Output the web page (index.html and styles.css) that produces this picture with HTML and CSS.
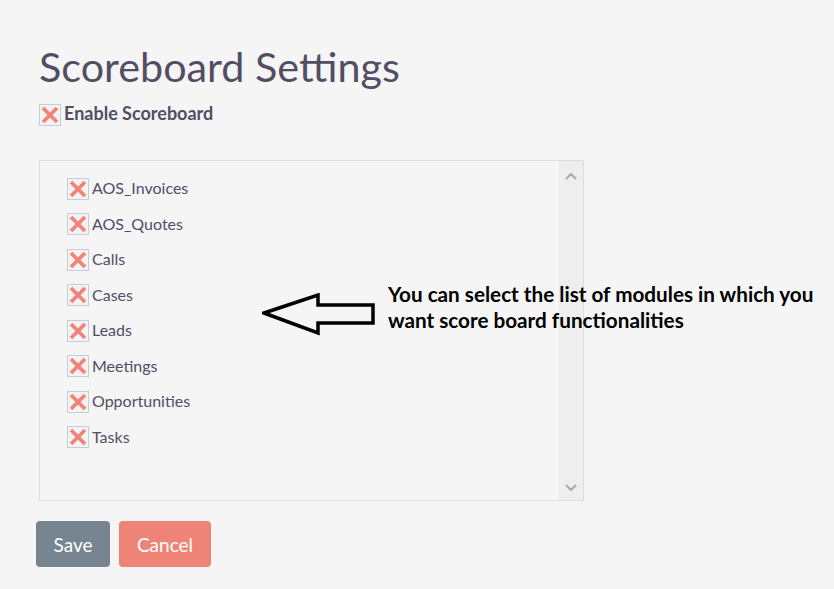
FILE: index.html
```html
<!DOCTYPE html>
<html>
<head>
<meta charset="utf-8">
<link rel="stylesheet" href="styles.css">
</head>
<body>
<div class="page">
  <h1 class="title">Scoreboard Settings</h1>
  <label class="enable">
    <span class="cb"><svg viewBox="0 0 20 20"><path d="M3 3L17 17M17 3L3 17"/></svg></span>
    <span>Enable Scoreboard</span>
  </label>
  <div class="listbox">
    <ul class="items">
      <li><span class="cb"><svg viewBox="0 0 20 20"><path d="M3 3L17 17M17 3L3 17"/></svg></span>AOS_Invoices</li>
      <li><span class="cb"><svg viewBox="0 0 20 20"><path d="M3 3L17 17M17 3L3 17"/></svg></span>AOS_Quotes</li>
      <li><span class="cb"><svg viewBox="0 0 20 20"><path d="M3 3L17 17M17 3L3 17"/></svg></span>Calls</li>
      <li><span class="cb"><svg viewBox="0 0 20 20"><path d="M3 3L17 17M17 3L3 17"/></svg></span>Cases</li>
      <li><span class="cb"><svg viewBox="0 0 20 20"><path d="M3 3L17 17M17 3L3 17"/></svg></span>Leads</li>
      <li><span class="cb"><svg viewBox="0 0 20 20"><path d="M3 3L17 17M17 3L3 17"/></svg></span>Meetings</li>
      <li><span class="cb"><svg viewBox="0 0 20 20"><path d="M3 3L17 17M17 3L3 17"/></svg></span>Opportunities</li>
      <li><span class="cb"><svg viewBox="0 0 20 20"><path d="M3 3L17 17M17 3L3 17"/></svg></span>Tasks</li>
    </ul>
    <div class="scrollbar">
      <svg class="sarrow" viewBox="0 0 12 8"><path d="M1 7L6 2L11 7"/></svg>
      <svg class="sarrow" viewBox="0 0 12 8"><path d="M1 1L6 6L11 1"/></svg>
    </div>
  </div>
  <div class="actions">
    <button class="btn save">Save</button>
    <button class="btn cancel">Cancel</button>
  </div>
  <svg class="callout-arrow" viewBox="0 0 114 44"><path d="M2 20L56 2L56 12L111 12L111 30L56 30L56 40Z"/></svg>
  <p class="note">You can select the list of modules in which you<br>want score board functionalities</p>
</div>
</body>
</html>
```

FILE: styles.css
```css
html, body {
  margin: 0;
  padding: 0;
  background: #f5f5f5;
}
.page {
  position: relative;
  width: 834px;
  height: 589px;
  padding: 40px 0 0 39px;
  box-sizing: border-box;
  font-family: Lato, "Open Sans", sans-serif;
  color: #534d64;
}
.title {
  margin: 0;
  font-size: 41.3px;
  font-weight: 400;
  line-height: 52px;
  letter-spacing: 0;
}
.enable {
  display: flex;
  align-items: center;
  gap: 3px;
  margin-top: 8px;
  font-size: 18px;
  font-weight: 700;
}
.cb {
  display: inline-flex;
  align-items: center;
  justify-content: center;
  width: 22px;
  height: 22px;
  border: 1px solid #c5ced6;
  background: #f3f3f3;
  box-sizing: border-box;
  flex: none;
}
.cb svg {
  width: 20px;
  height: 20px;
}
.cb path {
  stroke: #f3837a;
  stroke-width: 3.8;
  stroke-linecap: butt;
  fill: none;
}
.enable .cb { margin-top: 4px; }
.listbox {
  display: flex;
  width: 545px;
  height: 341px;
  margin-top: 34px;
  border: 1px solid #dcdcdc;
  box-sizing: border-box;
}
.items {
  flex: 1;
  list-style: none;
  margin: 0;
  padding: 9px 0 0 27px;
  border-right: 1px solid #fff;
}
.items li {
  display: flex;
  align-items: center;
  gap: 3px;
  height: 35.5px;
  font-size: 16px;
}
.items .cb { margin-top: 2px; }
.scrollbar {
  width: 25px;
  background: #eeeeee;
  display: flex;
  flex-direction: column;
  justify-content: space-between;
  align-items: center;
  padding: 11px 0 8px;
  box-sizing: border-box;
}
.sarrow {
  width: 12px;
  height: 8px;
}
.sarrow path {
  fill: none;
  stroke: #a9a9a9;
  stroke-width: 2;
}
.actions {
  display: flex;
  gap: 9px;
  margin: 20px 0 0 -3px;
}
.btn {
  height: 46px;
  border: none;
  border-radius: 4px;
  color: #fff;
  font-family: Lato, sans-serif;
  font-size: 19px;
  padding: 0 16px;
}
.save { background: #778591; width: 74px; }
.cancel { background: #f08377; width: 92px; }
.callout-arrow {
  position: absolute;
  left: 262px;
  top: 293px;
  width: 114px;
  height: 44px;
}
.callout-arrow path {
  fill: none;
  stroke: #000;
  stroke-width: 3.5;
  stroke-linejoin: miter;
}
.note {
  position: absolute;
  left: 388px;
  top: 281px;
  margin: 0;
  font-family: Lato, sans-serif;
  font-weight: 700;
  font-size: 20.7px;
  line-height: 26px;
  color: #000;
}
```
